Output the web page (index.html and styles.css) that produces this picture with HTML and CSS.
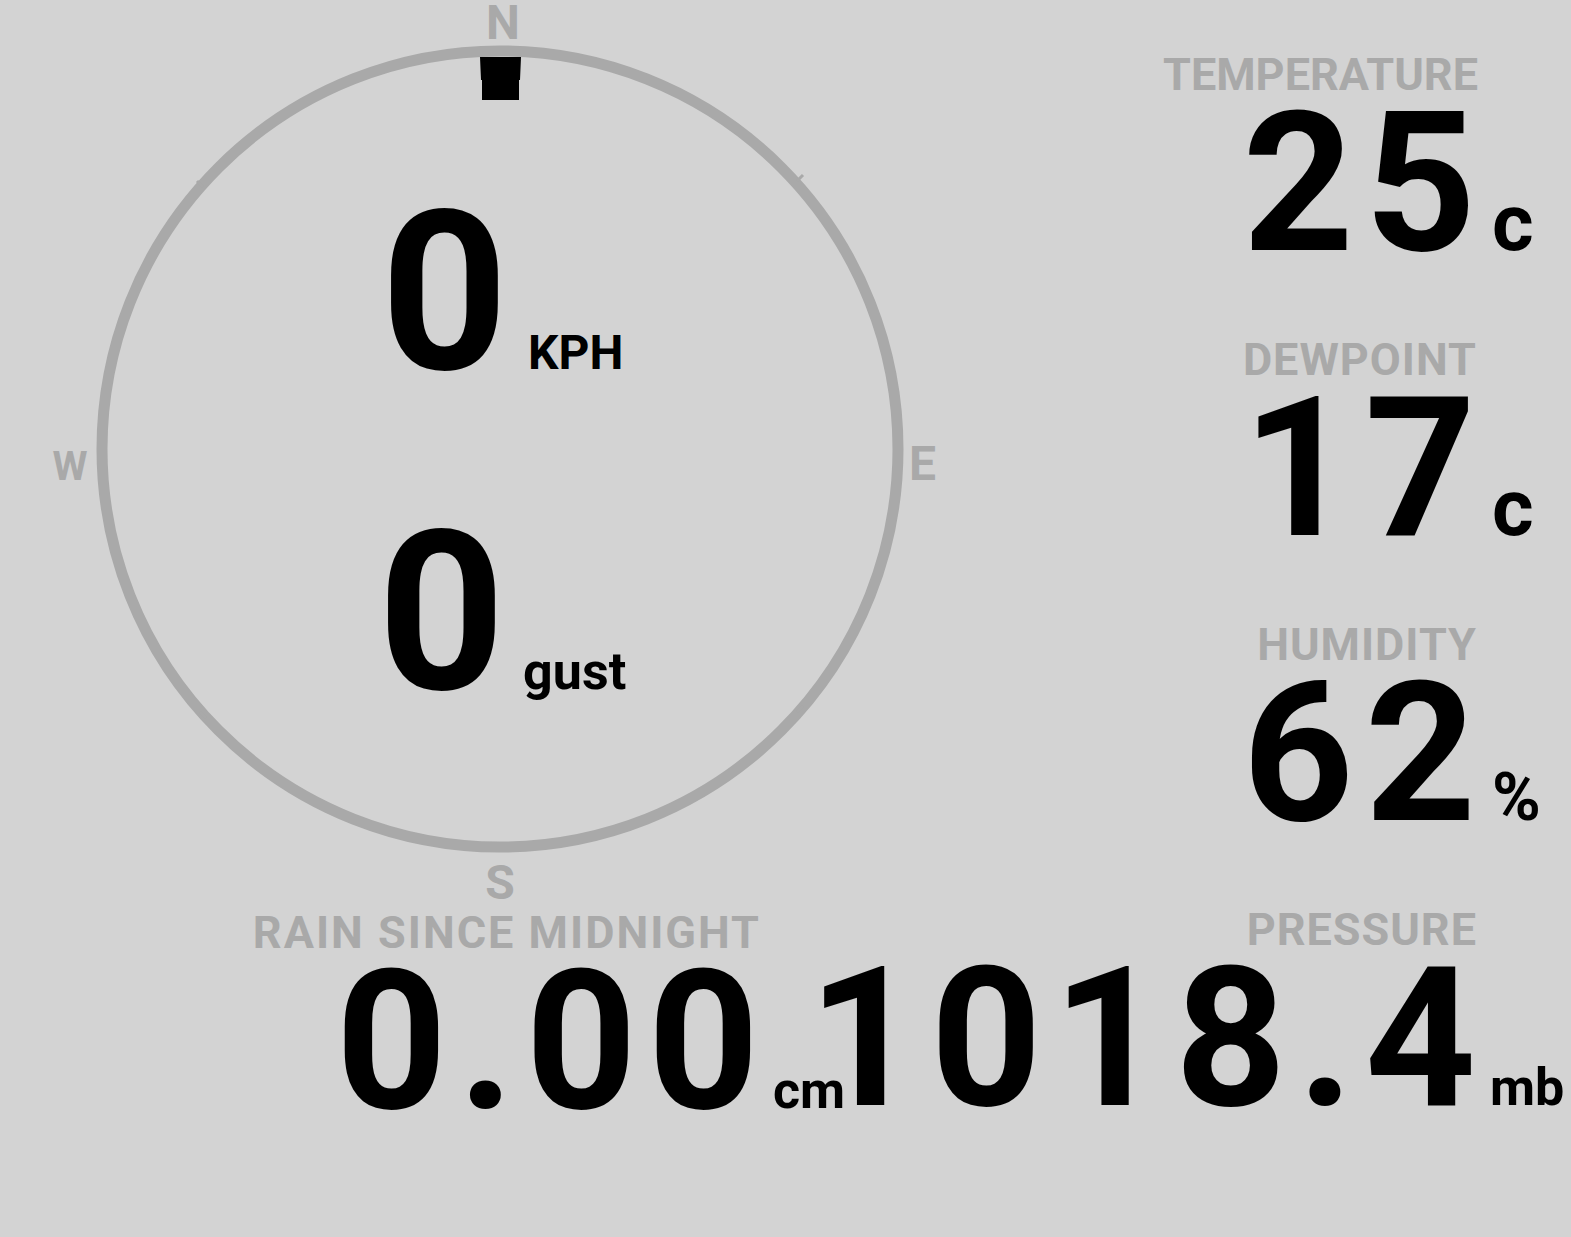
FILE: index.html
```html
<!DOCTYPE html>
<html>
<head>
  <title>Weather</title>
  <meta name="viewport" content="width=device-width, initial-scale=1.0">
  <link rel="stylesheet" href="styles.css">
</head>
<body>

  <div class="dash">

    <div class="left">
      <div class="compass">
        <svg class="dial" width="1000" height="905" viewBox="0 0 1000 905">
          <circle cx="500" cy="449" r="398" fill="none" stroke="darkgray" stroke-width="11"/>
          <g stroke="darkgray" stroke-width="3">
            <line x1="197" y1="181" x2="203" y2="187"/>
            <line x1="797" y1="181" x2="803" y2="175"/>
            <line x1="200" y1="712" x2="206" y2="718"/>
            <line x1="797" y1="712" x2="803" y2="706"/>
          </g>
          <path d="M480 57 H521 L520 80 H519 V100 H482 V80 H481 Z" fill="#000"/>
          <text class="point" x="503" y="39" text-anchor="middle">N</text>
          <text class="point" x="909" y="480">E</text>
          <text class="point" x="500" y="899" text-anchor="middle">S</text>
          <text class="point small" x="70" y="480" text-anchor="middle">W</text>
        </svg>
        <div class="readings">
          <div class="reading"><span class="speed">0</span><span class="speed-unit">KPH</span></div>
          <div class="reading"><span class="speed">0</span><span class="speed-unit gust">gust</span></div>
        </div>
      </div>

      <div class="stat rain">
        <div class="label">RAIN SINCE MIDNIGHT</div>
        <div class="value">0.00</div>
        <div class="unit">cm</div>
      </div>
    </div>

    <div class="right">
      <div class="stat">
        <div class="label tight">TEMPERATURE</div>
        <div class="value">25</div>
        <div class="unit big">c</div>
      </div>
      <div class="stat">
        <div class="label">DEWPOINT</div>
        <div class="value">17</div>
        <div class="unit big">c</div>
      </div>
      <div class="stat">
        <div class="label">HUMIDITY</div>
        <div class="value">62</div>
        <div class="unit pct">%</div>
      </div>
      <div class="stat">
        <div class="label">PRESSURE</div>
        <div class="value">1018.4</div>
        <div class="unit">mb</div>
      </div>
    </div>

  </div>

</body>
</html>
```

FILE: styles.css
```css
html, body {
  margin: 0;
  padding: 0;
}

body {
  background-color: lightgray;
  color: #000;
  font-family: Roboto, "Liberation Sans", sans-serif;
  font-weight: 700;
  width: 1571px;
  height: 1237px;
  overflow: hidden;
}

.dash {
  display: flex;
}

.left {
  width: 1000px;
  display: flex;
  flex-direction: column;
}

.right {
  width: 571px;
  padding-top: 52px;
  display: flex;
  flex-direction: column;
  align-items: flex-end;
}

/* compass */
.compass {
  position: relative;
  width: 1000px;
  height: 905px;
}

.dial {
  display: block;
  overflow: visible;
}

.point {
  font-family: Roboto, "Liberation Sans", sans-serif;
  font-weight: 700;
  font-size: 48px;
  fill: darkgray;
}

.point.small {
  font-size: 40px;
}

.readings {
  position: absolute;
  inset: 0;
  display: flex;
  flex-direction: column;
  justify-content: center;
}

.reading {
  height: 320px;
  line-height: 320px;
  text-align: center;
  white-space: nowrap;
  padding-left: 4px;
}

.speed {
  font-size: 222px;
}

.speed-unit {
  font-size: 48px;
  margin-left: 20px;
}

.speed-unit.gust {
  font-size: 52px;
  margin-left: 18px;
}

/* stats */
.stat {
  display: grid;
  grid-template-columns: auto 95px;
  align-items: baseline;
  margin-bottom: 78px;
}

.label {
  grid-column: 1;
  justify-self: end;
  font-size: 45px;
  line-height: 45px;
  letter-spacing: 1px;
  margin-right: -1px;
  color: darkgray;
  margin-bottom: 12px;
  white-space: nowrap;
}

.label.tight {
  letter-spacing: 0;
  margin-right: -2px;
}

.value {
  grid-column: 1;
  justify-self: end;
  font-size: 194px;
  line-height: 150px;
  letter-spacing: 11px;
  margin-right: -11px;
  white-space: nowrap;
}

.unit {
  grid-column: 2;
  font-size: 52px;
  line-height: 20px;
  padding-left: 14px;
  white-space: nowrap;
}

.unit.big {
  font-size: 80px;
  padding-left: 16px;
}

.unit.pct {
  font-size: 66px;
  padding-left: 16px;
}

.rain {
  align-self: flex-end;
  margin-right: 146px;
  margin-top: 5px;
  margin-bottom: 0;
}

.rain .label {
  letter-spacing: 2px;
  margin-right: -2px;
}
```
